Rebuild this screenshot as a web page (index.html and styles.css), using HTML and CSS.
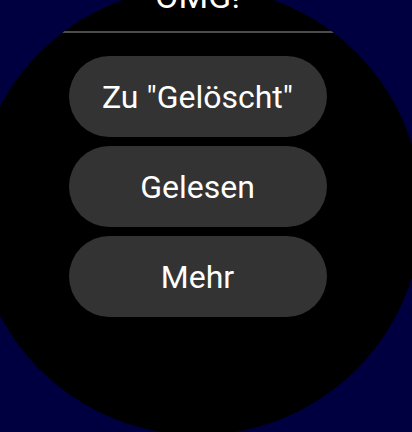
FILE: index.html
```html
<!DOCTYPE html>
<html lang="de">
<head>
<meta charset="utf-8">
<title>OMG!</title>
<link rel="stylesheet" href="styles.css">
</head>
<body>
<div class="screen">
  <div class="dial">
    <div class="title">OMG!</div>
    <div class="divider"></div>
    <div class="actions">
      <div class="chip">Zu "Gelöscht"</div>
      <div class="chip">Gelesen</div>
      <div class="chip">Mehr</div>
    </div>
  </div>
</div>
</body>
</html>
```
FILE: styles.css
```css
html, body {
  margin: 0;
  padding: 0;
  width: 412px;
  height: 432px;
  overflow: hidden;
  background: #000040;
  font-family: Roboto, "Noto Sans", "Liberation Sans", sans-serif;
}
.screen {
  width: 412px;
  height: 432px;
  overflow: hidden;
}
.dial {
  width: 448px;
  height: 448px;
  margin-left: -26.5px;
  margin-top: -13px;
  border-radius: 50%;
  background: #000;
  overflow: hidden;
  display: flex;
  flex-direction: column;
  align-items: center;
}
.title {
  margin-top: -11px;
  font-size: 34px;
  line-height: 40px;
  color: #fff;
  text-align: center;
}
.divider {
  margin-top: 15px;
  width: 100%;
  height: 2px;
  background: #4c4c4c;
  flex: none;
}
.actions {
  margin-top: 23px;
  display: flex;
  flex-direction: column;
  gap: 9px;
}
.chip {
  width: 258px;
  height: 81px;
  border-radius: 40.5px;
  background: #333333;
  color: #fff;
  font-size: 32px;
  display: flex;
  align-items: center;
  justify-content: center;
}
```
